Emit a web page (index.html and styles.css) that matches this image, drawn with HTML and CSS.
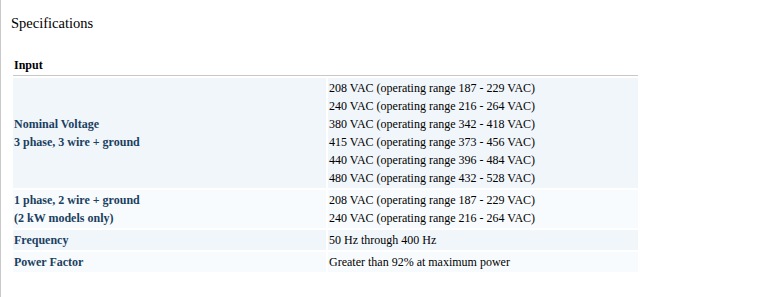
FILE: index.html
```html
<!DOCTYPE html>
<html>
<head>
<meta charset="utf-8">
<link rel="stylesheet" href="styles.css">
</head>
<body>
<div class="page">
  <h2 class="title">Specifications</h2>
  <table class="spec">
    <thead>
      <tr><th colspan="2" class="group">Input</th></tr>
    </thead>
    <tbody>
      <tr class="odd">
        <td class="label">Nominal Voltage<br>3 phase, 3 wire + ground</td>
        <td class="value">208 VAC (operating range 187 - 229 VAC)<br>240 VAC (operating range 216 - 264 VAC)<br>380 VAC (operating range 342 - 418 VAC)<br>415 VAC (operating range 373 - 456 VAC)<br>440 VAC (operating range 396 - 484 VAC)<br>480 VAC (operating range 432 - 528 VAC)</td>
      </tr>
      <tr class="even">
        <td class="label">1 phase, 2 wire + ground<br>(2 kW models only)</td>
        <td class="value">208 VAC (operating range 187 - 229 VAC)<br>240 VAC (operating range 216 - 264 VAC)</td>
      </tr>
      <tr class="odd">
        <td class="label">Frequency</td>
        <td class="value">50 Hz through 400 Hz</td>
      </tr>
      <tr class="even">
        <td class="label">Power Factor</td>
        <td class="value">Greater than 92% at maximum power</td>
      </tr>
    </tbody>
  </table>
</div>
</body>
</html>
```
FILE: styles.css
```css
html, body {
  margin: 0;
  padding: 0;
  background: #fff;
}
body {
  font-family: "Liberation Serif", "Times New Roman", serif;
  color: #000;
}
.page {
  border-left: 1px solid #c8c8c8;
  min-height: 297px;
  box-sizing: border-box;
  padding: 13px 0 0 10px;
}
.title {
  font-size: 14.5px;
  font-weight: normal;
  margin: 0 0 21px 0;
  line-height: 20px;
}
.spec {
  border-collapse: separate;
  border-spacing: 2px;
  width: 629px;
  font-size: 12px;
  line-height: 18px;
}
.group {
  text-align: left;
  font-weight: bold;
  padding: 0 2px 1px 1px;
  border-bottom: 1px solid #c8c8c8;
}
.spec td {
  padding: 1px 2px 1px 1px;
  vertical-align: middle;
}
.label {
  width: 310px;
  font-weight: bold;
  color: #1b3f60;
}
.odd td { background: #f1f6fb; }
.even td { background: #f8fbfd; }
```
